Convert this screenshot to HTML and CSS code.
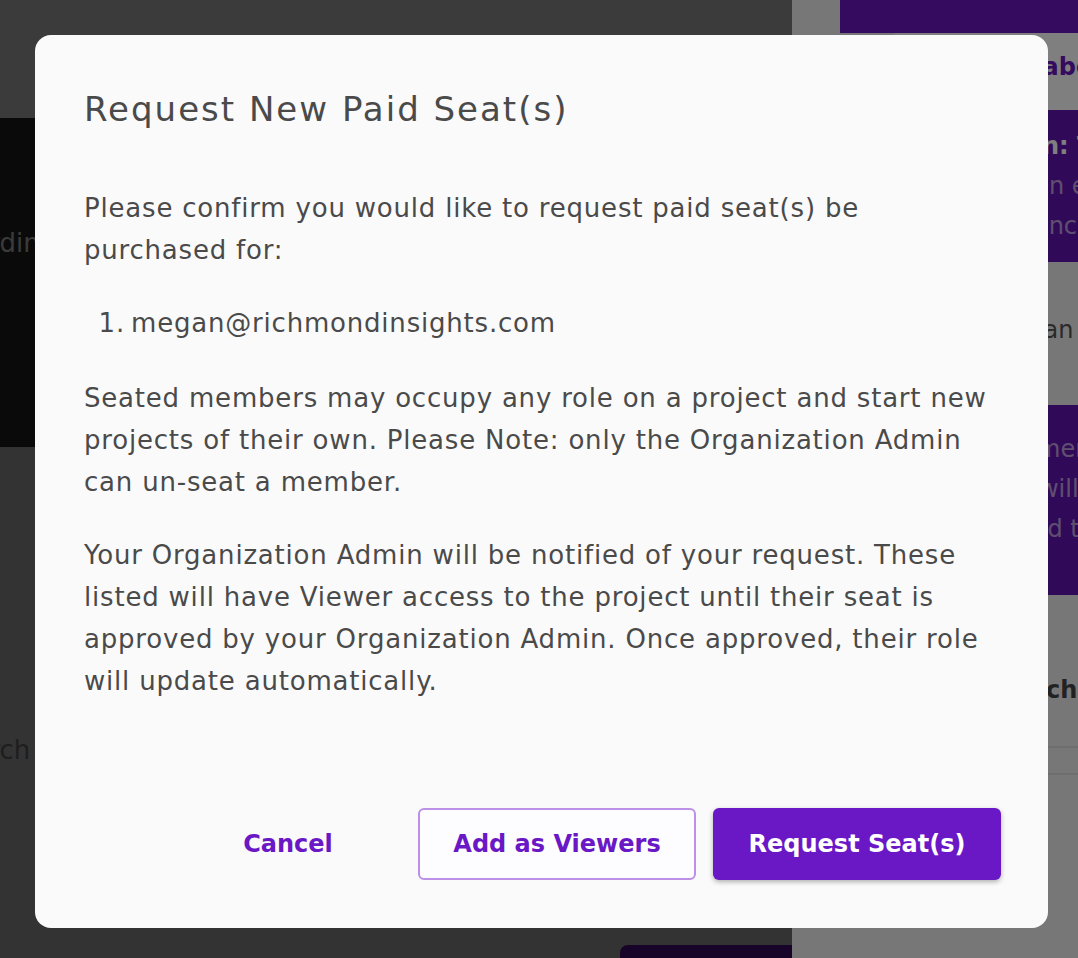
FILE: index.html
```html
<!DOCTYPE html>
<html lang="en">
<head>
<meta charset="utf-8">
<title>Request New Paid Seat(s)</title>
<link rel="stylesheet" href="styles.css">
</head>
<body>
<div class="app">
  <main class="main">
    <header class="main-top"></header>
    <section class="hero">
      <h1 class="hero-title">Onboarding</h1>
    </section>
    <section class="main-body">
      <p class="main-label">Search</p>
      <button class="main-cta" type="button">Continue</button>
    </section>
  </main>
  <aside class="side">
    <div class="side-head"></div>
    <div class="side-card">
      <p class="side-card-title">Collaborators</p>
    </div>
    <div class="promo">
      <p class="promo-title">Plan: Team</p>
      <p class="promo-text">Open editors</p>
      <p class="promo-text">Finance contact</p>
    </div>
    <p class="side-note">Organ plan</p>
    <div class="promo promo-tall">
      <p class="promo-text">Former members</p>
      <p class="promo-text">Sit will be</p>
      <p class="promo-text">Need to upgrade</p>
    </div>
    <p class="side-heading">Batch actions</p>
    <div class="side-rule"></div>
    <div class="side-rule side-rule-2"></div>
  </aside>
</div>

<div class="overlay"></div>

<div class="modal" role="dialog" aria-labelledby="modal-title">
  <h2 class="modal-title" id="modal-title">Request New Paid Seat(s)</h2>
  <div class="modal-body">
    <p class="modal-text">Please confirm you would like to request paid seat(s) be<br>purchased for:</p>
    <ol class="modal-list">
      <li>megan@richmondinsights.com</li>
    </ol>
    <p class="modal-text">Seated members may occupy any role on a project and start new<br>projects of their own. Please Note: only the Organization Admin<br>can un-seat a member.</p>
    <p class="modal-text">Your Organization Admin will be notified of your request. These<br>listed will have Viewer access to the project until their seat is<br>approved by your Organization Admin. Once approved, their role<br>will update automatically.</p>
  </div>
  <div class="modal-footer">
    <button class="btn btn-text" type="button">Cancel</button>
    <button class="btn btn-outline" type="button">Add as Viewers</button>
    <button class="btn btn-primary" type="button">Request Seat(s)</button>
  </div>
</div>
</body>
</html>
```
FILE: styles.css
```css
* { box-sizing: border-box; }

html, body {
  margin: 0;
  padding: 0;
  height: 100%;
}

body {
  font-family: "DejaVu Sans", sans-serif;
  background: #eeeeee;
  overflow: hidden;
}

/* ---------- underlying page ---------- */
.app {
  display: grid;
  grid-template-columns: 792px 1fr;
  height: 958px;
  overflow: hidden;
}

.main {
  display: flex;
  flex-direction: column;
  background: #666666;
  overflow: hidden;
}

.main-top {
  flex-shrink: 0;
  height: 118px;
  background: #767676;
}

.hero {
  flex-shrink: 0;
  height: 329px;
  background: #141414;
  padding-top: 109px;
}

.hero-title {
  margin: 0 0 0 -96px;
  font-size: 26px;
  font-weight: normal;
  line-height: 32px;
  color: #767676;
  white-space: nowrap;
}

.main-body {
  flex: 1;
  min-height: 0;
  display: flex;
  flex-direction: column;
  padding-top: 287px;
  overflow: hidden;
}

.main-label {
  flex-shrink: 0;
  margin: 0 0 0 -59px;
  font-size: 26px;
  line-height: 32px;
  color: #3c3c3c;
  white-space: nowrap;
}

.main-cta {
  flex-shrink: 0;
  align-self: flex-end;
  margin-top: 179px;
  width: 172px;
  height: 50px;
  border: 0;
  border-radius: 8px 0 0 0;
  background: #2e0850;
  color: #ffffff;
  font: inherit;
}

.side {
  display: flex;
  flex-direction: column;
  background: #eeeeee;
  overflow: hidden;
  white-space: nowrap;
  font-size: 24px;
}

.side p {
  margin: 0;
  line-height: 40px;
}

.side-head {
  flex-shrink: 0;
  height: 33px;
  margin-left: 48px;
  background: #6b17c0;
}

.side-card {
  flex-shrink: 0;
  height: 77px;
  margin-left: 98px;
  padding: 14px 0 0 102px;
  background: #ffffff;
  border-radius: 8px 0 0 0;
}

.side .side-card-title {
  font-weight: bold;
  color: #6b17c0;
}

.promo {
  flex-shrink: 0;
  height: 152px;
  padding: 16px 0 16px 208px;
  background: #6312b2;
}

.promo-tall {
  height: 190px;
  padding-top: 24px;
}

.promo-title {
  font-weight: bold;
  color: #ffffff;
}

.promo-text {
  color: rgba(255, 255, 255, 0.6);
}

.side .side-note {
  flex-shrink: 0;
  padding: 48px 0 55px 208px;
  color: #555555;
}

.side .side-heading {
  flex-shrink: 0;
  margin-top: 75px;
  padding-left: 208px;
  font-weight: bold;
  color: #444444;
}

.side-rule {
  flex-shrink: 0;
  height: 2px;
  margin-top: 36px;
  background: #dddddd;
}

.side-rule-2 {
  margin-top: 25px;
}

/* ---------- overlay ---------- */
.overlay {
  position: fixed;
  inset: 0;
  background: rgba(0, 0, 0, 0.5);
}

/* ---------- modal ---------- */
.modal {
  position: absolute;
  left: 35px;
  top: 35px;
  width: 1013px;
  padding: 52px 47px 48px 49px;
  background: #fafafa;
  border-radius: 16px;
  color: #4a4a4a;
}

.modal-title {
  margin: 0 0 56px;
  font-size: 34px;
  font-weight: normal;
  line-height: 44px;
  letter-spacing: 2px;
  color: #4a4a4a;
}

.modal-body {
  font-size: 26px;
  line-height: 42px;
  letter-spacing: 0.8px;
  white-space: nowrap;
}

.modal-text {
  margin: 0 0 31px;
}

.modal-list {
  margin: 0 0 33px;
  padding-left: 47px;
}

.modal-list li::marker {
  content: counter(list-item) ".\2009";
}

.modal-footer {
  display: flex;
  justify-content: flex-end;
  align-items: center;
  gap: 17px;
  margin-top: 106px;
}

.btn {
  height: 72px;
  padding: 0;
  border-radius: 6px;
  font-family: "DejaVu Sans", sans-serif;
  font-size: 24px;
  font-weight: bold;
  cursor: pointer;
}

.btn-text {
  width: 160px;
  margin-right: 33px;
  border: 0;
  background: transparent;
  color: #6a17c6;
}

.btn-outline {
  width: 278px;
  border: 2px solid #bb90e6;
  background: #fdfcfe;
  color: #6a17c6;
}

.btn-primary {
  width: 288px;
  border: 0;
  background: #6a17c6;
  color: #ffffff;
  box-shadow: 0 2px 5px rgba(0, 0, 0, 0.3);
}
```
